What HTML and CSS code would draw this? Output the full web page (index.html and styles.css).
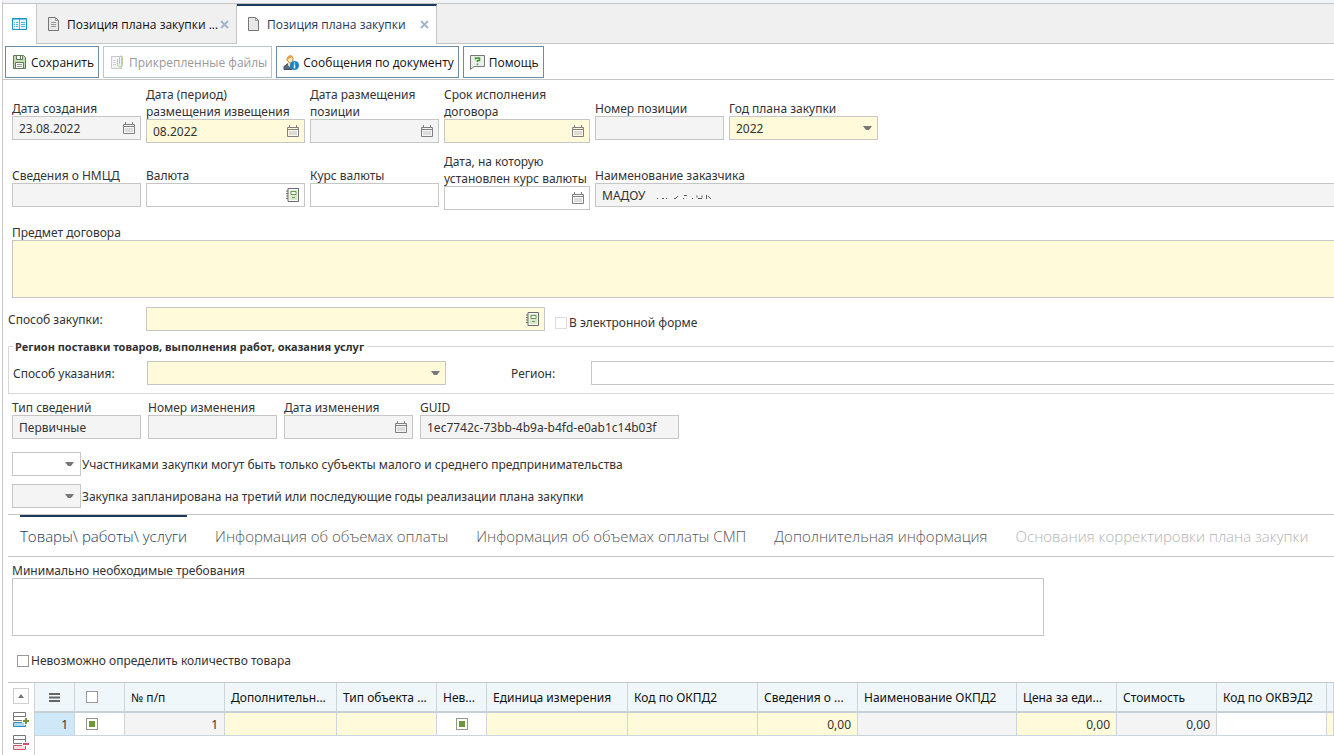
FILE: index.html
```html
<!DOCTYPE html>
<html lang="ru">
<head>
<meta charset="utf-8">
<title>Позиция плана закупки</title>
<link rel="stylesheet" href="styles.css">
</head>
<body>
<svg class="defs" aria-hidden="true">
  <symbol id="cal" viewBox="0 0 12 12"><path d="M.5 2.500h11v9H.5zM.5 4.500h11M2.500 0v3M9.500 0v3" fill="none" stroke="#808080"/><path d="M2 6h8v4H2z" fill="#dcdcdc"/></symbol>
  <symbol id="book" viewBox="0 0 13 14"><path d="M2 .5h10.500v13H2z" fill="#fff" stroke="#6b6b6b"/><path d="M3.500 2h8v10h-8z" fill="#d8e8cc"/><path d="M0 3h2M0 5.500h2M0 8h2M0 10.500h2" stroke="#6b6b6b"/><path d="M5 3.500h5v3H5zM6 9.500h3" fill="#fff" stroke="#6b9a4a"/></symbol>
  <symbol id="arrow" viewBox="0 0 9 5"><path d="M0 0h9L6 4H3z" fill="#777"/></symbol>
  <symbol id="cross" viewBox="0 0 9 9"><path d="M1 1l7 7M8 1L1 8" stroke="#a3b6ca" stroke-width="2"/></symbol>
</svg>
<div class="app">
  <nav class="tabs">
    <button class="tab home" aria-label="Главная"><svg width="15" height="12" viewBox="0 0 15 12"><path d="M.5.5h14v11H.5z" fill="#e4f5fc" stroke="#1591c9"/><path d="M7.500 1v10M9 4.500h4M9 6.500h4M9 8.500h4" stroke="#52b4dc"/><path d="M.5 1h14" stroke="#1591c9"/><path d="M2 4.500h1M4 4.500h2M2 6.500h1M4 6.500h2M2 8.500h1M4 8.500h2" stroke="#52b4dc"/></svg></button>
    <div class="tab"><svg width="11" height="14" viewBox="0 0 11 14"><path d="M.5.5h7l3 3v10H.5z" fill="#e8e8e8" stroke="#777"/><path d="M7.500.5v3h3M3 5.500h5M3 7.500h5M3 9.500h5" fill="none" stroke="#999"/></svg><a href="#">Позиция плана закупки ...</a><button class="close" aria-label="Закрыть"><svg width="9" height="9"><use href="#cross"/></svg></button></div>
    <div class="tab active"><svg width="11" height="14" viewBox="0 0 11 14"><path d="M.5.5h7l3 3v10H.5z" fill="#e8e8e8" stroke="#777"/><path d="M7.500.5v3h3" fill="none" stroke="#999"/></svg><a href="#">Позиция плана закупки</a><button class="close" aria-label="Закрыть"><svg width="9" height="9"><use href="#cross"/></svg></button></div>
  </nav>
  <div class="toolbar">
    <button class="tool"><svg width="15" height="15" viewBox="0 0 15 15"><path d="M1.500.5h10l2 2v11h-12z" fill="#c4dcb2" stroke="#5f7a52"/><path d="M4.500.5h6v4h-6z" fill="#fff" stroke="#5f7a52"/><path d="M8.500 1v3" stroke="#5f7a52"/><path d="M3.500 7.500h8v6h-8z" fill="#fff" stroke="#5f7a52"/><path d="M5 9.500h5M5 11.500h5" stroke="#999"/></svg>Сохранить</button>
    <button class="tool" disabled><svg width="15" height="15" viewBox="0 0 15 15"><path d="M1.500 1.500h10v12h-10z" fill="#f5f5f5" stroke="#c9c9c9"/><path d="M3 5.500h3M3 7.500h3M3 9.500h3" stroke="#d5d5d5"/><path d="M7.500 4v5.500a2.500 2.500 0 0 0 5 0V2.500a1.500 1.500 0 0 0-3 0v7" fill="none" stroke="#b5cc9a"/></svg>Прикрепленные файлы</button>
    <button class="tool"><svg width="16" height="15" viewBox="0 0 16 15"><path d="M1 14.500v-3l4-3 4 3v3z" fill="#5c6b7a" stroke="#3f4d5b"/><path d="M5 7.500h3v3l-1.500 1.500L5 10z" fill="#f7e4bd"/><path d="M4.500 5.500V3l2-2h2l1.500 2v3L8.500 8h-2z" fill="#fbe6ba" stroke="#c08a3c"/><path d="M3.500 6V3L6 .5h3l1 1.500-5 2v2z" fill="#e0a14a"/><circle cx="11.500" cy="10.500" r="4.500" fill="#1583c8"/><path d="M11.500 7.500v1M11.500 9.500v4" stroke="#fff" stroke-width="1.500"/></svg>Сообщения по документу</button>
    <button class="tool"><svg width="15" height="15" viewBox="0 0 15 15"><path d="M.5.5h14v11H4l-3.500 3z" fill="#eceeea" stroke="#777"/><path d="M5.500 4.500V3h4v2.500h-2V7M7.500 8.500V10" fill="none" stroke="#3b9b33" stroke-width="1.500"/></svg>Помощь</button>
  </div>
  <main>
    <div class="row row-top">
      <label class="field single w129">Дата создания<span class="box ro"><input value="23.08.2022" readonly><svg width="12" height="12"><use href="#cal"/></svg></span></label>
      <label class="field w159">Дата (период)<br>размещения извещения<span class="box req"><input value="08.2022"><svg width="12" height="12"><use href="#cal"/></svg></span></label>
      <label class="field w129">Дата размещения<br>позиции<span class="box ro"><input readonly><svg width="12" height="12"><use href="#cal"/></svg></span></label>
      <label class="field w146">Срок исполнения<br>договора<span class="box req"><input><svg width="12" height="12"><use href="#cal"/></svg></span></label>
      <label class="field single w129">Номер позиции<span class="box ro"><input readonly></span></label>
      <label class="field single w149">Год плана закупки<span class="box req"><select><option>2022</option></select><svg width="9" height="5"><use href="#arrow"/></svg></span></label>
    </div>
    <div class="row row-next">
      <label class="field single w129">Сведения о НМЦД<span class="box ro"><input readonly></span></label>
      <label class="field single w159">Валюта<span class="box"><input><svg width="13" height="14"><use href="#book"/></svg></span></label>
      <label class="field single w129">Курс валюты<span class="box"><input></span></label>
      <label class="field w146">Дата, на которую<br>установлен курс валюты<span class="box"><input><svg width="12" height="12"><use href="#cal"/></svg></span></label>
      <label class="field single grow">Наименование заказчика<span class="box ro open"><input class="org" value="МАДОУ" readonly><svg width="58" height="12" viewBox="0 0 58 12"><path d="M1 9.500h1M6 9.500h2M10 9.500h1M18 9.500h2M20 8.500h1M21 7.500h1M27 9.500h1M28 6.500h3M36 9.500h1M41 6.500v2M46 6.500v2M42 9.500h4M50.500 6v4M52 7.500h1M53 8.500h1M54 9.500h1" stroke="#555" fill="none"/></svg></span></label>
    </div>
    <label class="field subject">Предмет договора<textarea class="area req open"></textarea></label>
    <div class="line">
      <label class="cap" for="way">Способ закупки:</label>
      <span class="box req w399"><input id="way"><svg width="13" height="14"><use href="#book"/></svg></span>
      <label class="check electronic"><input type="checkbox" disabled>В электронной форме</label>
    </div>
    <fieldset class="region">
      <legend>Регион поставки товаров, выполнения работ, оказания услуг</legend>
      <div class="region-line">
        <label class="cap-mode" for="mode">Способ указания:</label>
        <span class="box req w299"><select id="mode"><option></option></select><svg width="9" height="5"><use href="#arrow"/></svg></span>
        <label class="cap-region" for="reg">Регион:</label>
        <span class="box open grow"><input id="reg"></span>
      </div>
    </fieldset>
    <div class="row row-info">
      <label class="field w129">Тип сведений<span class="box ro"><input value="Первичные" readonly></span></label>
      <label class="field w129">Номер изменения<span class="box ro"><input readonly></span></label>
      <label class="field w129">Дата изменения<span class="box ro"><input readonly><svg width="12" height="12"><use href="#cal"/></svg></span></label>
      <label class="field w259">GUID<span class="box ro"><input value="1ec7742c-73bb-4b9a-b4fd-e0ab1c14b03f" readonly></span></label>
    </div>
    <label class="flag"><span class="box"><select><option></option></select><svg width="9" height="5"><use href="#arrow"/></svg></span>Участниками закупки могут быть только субъекты малого и среднего предпринимательства</label>
    <label class="flag"><span class="box ro"><select><option></option></select><svg width="9" height="5"><use href="#arrow"/></svg></span>Закупка запланирована на третий или последующие годы реализации плана закупки</label>
    <nav class="sections">
      <a class="current" href="#">Товары\ работы\ услуги</a>
      <a href="#">Информация об объемах оплаты</a>
      <a href="#">Информация об объемах оплаты СМП</a>
      <a href="#">Дополнительная информация</a>
      <a class="off" href="#">Основания корректировки плана закупки</a>
    </nav>
    <label class="field needs">Минимально необходимые требования<textarea class="area"></textarea></label>
    <label class="check unknown"><input type="checkbox">Невозможно определить количество товара</label>
    <div class="grid">
      <div class="side">
        <button class="up" aria-label="Вверх"><svg width="6" height="4" viewBox="0 0 6 4"><path d="M0 4l3-4 3 4z" fill="#777"/></svg></button>
        <button aria-label="Добавить строку"><svg width="16" height="15" viewBox="0 0 16 15"><path d="M.5.5h12v4H.5zM.5 4.500h12v4H.5z" fill="#fff" stroke="#777"/><path d="M12.500 10.500H.5v4h12z" fill="#a9d8ec" stroke="#2a8fc0"/><path d="M13 5v8M9 9h8" stroke="#fff" stroke-width="4"/><path d="M13 6v6M10 9h6" stroke="#6c983a" stroke-width="2"/></svg></button>
        <button aria-label="Удалить строку"><svg width="16" height="15" viewBox="0 0 16 15"><path d="M.5.5h12v4H.5zM.5 4.500h12v4H.5z" fill="#fff" stroke="#777"/><path d="M.5 10.500h12v4H.5z" fill="#fbdde2" stroke="#d0526a"/><path d="M9 9h7" stroke="#fff" stroke-width="4"/><path d="M10 9h6" stroke="#d0526a" stroke-width="2"/></svg></button>
      </div>
      <table>
        <colgroup><col class="c40"><col class="c50"><col class="c100"><col class="c112"><col class="c100"><col class="c50"><col class="c141"><col class="c130"><col class="c100"><col class="c159"><col class="c100"><col class="c100"><col class="c110"><col></colgroup>
        <thead><tr><th class="mid"><svg width="11" height="9" viewBox="0 0 11 9"><path d="M0 1h11M0 4.500h11M0 8h11" stroke="#666" stroke-width="2"/></svg></th><th class="pick"><input type="checkbox" aria-label="Выбрать все"></th><th>№ п/п</th><th>Дополнительн...</th><th>Тип объекта ...</th><th>Нев...</th><th>Единица измерения</th><th>Код по ОКПД2</th><th>Сведения о ...</th><th>Наименование ОКПД2</th><th>Цена за еди...</th><th>Стоимость</th><th>Код по ОКВЭД2</th><th></th></tr></thead>
        <tbody><tr><td class="num sel">1</td><td class="pick"><input type="checkbox" checked aria-label="Выбрать строку"></td><td class="num ro">1</td><td class="req"></td><td class="req"></td><td class="mid"><input type="checkbox" checked aria-label="Невозможно определить"></td><td class="req"></td><td class="req"></td><td class="num req">0,00</td><td class="ro"></td><td class="num req">0,00</td><td class="num ro">0,00</td><td></td><td class="req"></td></tr></tbody>
      </table>
    </div>
  </main>
</div>
</body>
</html>
```
FILE: styles.css
```css
* { box-sizing: border-box; }
body { margin: 0; background: #fff; color: #333; font: 12px/17px "Noto Sans", sans-serif; overflow: hidden; }
button, input, select, textarea { font: inherit; color: inherit; margin: 0; padding: 0; border: 0; background: none; border-radius: 0; outline: 0; }
a { color: inherit; text-decoration: none; }
svg { flex: none; display: block; }
.defs { position: absolute; width: 0; height: 0; }
.app { border-top: 3px solid #f1f3f6; margin-left: 2px; border-left: 1px solid #c6c6c6; min-height: 100vh; }

.tabs, .toolbar { font-family: "Open Sans", sans-serif; }
.tabs { display: flex; height: 41px; background: #f0f0f0; border-top: 1px solid #c6c6c6; border-bottom: 1px solid #c6c6c6; }
.tab { display: flex; align-items: center; width: 200px; height: 40px; padding: 0 7px 0 11px; border-right: 1px solid #c6c6c6; color: #111; }
.tab a { flex: 1; margin-left: 8px; white-space: nowrap; }
.tab.home { width: 34px; padding: 0; justify-content: center; background: #fff; }
.tab.active { background: #fff; border-top: 2px solid #1c3a5a; padding-bottom: 2px; color: #1c3a5a; }
.close { height: 14px; }

.toolbar { display: flex; gap: 4px; padding: 2px; height: 36px; border-bottom: 1px solid #c6c6c6; }
.tool { display: flex; align-items: center; gap: 4px; height: 32px; padding: 0 4px 0 6px; border: 1px solid #6f8aa3; background: #fff; color: #111; white-space: nowrap; }
.tool:disabled { border-color: #b9c6d2; color: #999; }

.row { display: flex; align-items: flex-end; gap: 5px; margin-left: 9px; height: 57px; }
.row-top { margin-top: 6px; }
.row-next { margin-top: 10px; }
.row-info { gap: 7px; margin-top: 5px; height: 40px; }
.field { display: block; white-space: nowrap; }
.field .box, .field .area { margin-top: -1px; }
.single { margin-bottom: 3px; }
.grow { flex: 1; }
.w129 { width: 129px; }
.w146 { width: 146px; }
.w149 { width: 149px; }
.w159 { width: 159px; }
.w259 { width: 259px; }
.w299 { width: 299px; }
.w399 { width: 399px; }
.box { display: flex; align-items: center; height: 24px; padding: 0 5px 0 6px; border: 1px solid #c6c6c6; background: #fff; }
.box input, .box select { flex: 1; min-width: 0; width: 0; height: 22px; appearance: none; }
.box .org { flex: none; width: 54px; }
.box.ro, td.ro { background: #f4f4f4; }
.box.req, .area.req, td.req { background: #fffada; }
.box.open, .area.open { border-right: 0; }
.area { display: block; width: 100%; height: 58px; border: 1px solid #c6c6c6; resize: none; }
.subject { margin: 14px 0 0 9px; }

.line { display: flex; align-items: center; margin: 9px 0 0 5px; }
.cap { width: 138px; }
.check { display: flex; align-items: center; gap: 2px; }
.check input, th input, td input { appearance: none; width: 12px; height: 12px; border: 1px solid #999; background: #fff; display: block; }
.electronic { margin: 7px 0 0 10px; }
.check input:disabled { border-color: #ddd; }
td input:checked { border-color: #8d9c82; background: #6c983a content-box; padding: 2px; }

.region { margin: 7px 0 0 5px; padding: 0 0 8px 4px; border: 1px solid #d8d8d8; border-right: 0; min-width: 0; }
.region legend { padding: 0 3px 0 2px; font-weight: bold; font-size: 11px; }
.region-line { display: flex; align-items: center; margin-top: 6px; }
.cap-mode { width: 134px; }
.cap-region { width: 80px; margin-left: 65px; }

.flag { display: flex; align-items: center; gap: 1px; margin: 13px 0 0 9px; }
.flag + .flag { margin-top: 8px; }
.flag .box { width: 69px; padding-right: 6px; }

.sections { display: flex; gap: 28px; margin: 6px 0 0 5px; padding-left: 12px; height: 43px; border-top: 1px solid #c6c6c6; border-bottom: 1px solid #c6c6c6; font: 300 15px/38px "Open Sans", sans-serif; color: #555; white-space: nowrap; }
.sections a { border-top: 2px solid transparent; }
.sections .current { color: #1c3a5a; border-color: #1c3a5a; }
.sections .off { color: #b4b4b4; }
.needs { width: 1032px; margin: 5px 0 0 9px; }
.unknown { margin: 16px 0 0 14px; }

.grid { display: flex; margin: 13px 0 0 5px; border-top: 1px solid #c6c6c6; }
.side { display: flex; flex-direction: column; align-items: center; gap: 8px; width: 27px; min-height: 73px; padding-top: 5px; border-right: 1px solid #cbd5dc; }
.up { display: flex; align-items: center; justify-content: center; width: 16px; height: 16px; border: 1px solid #d0d0d0; }
table { flex: 1; width: 0; align-self: flex-start; table-layout: fixed; border-collapse: separate; border-spacing: 0; }
th, td { border-right: 1px solid #cbd5dc; border-bottom: 1px solid #cbd5dc; padding: 0 6px; font-weight: normal; text-align: left; white-space: nowrap; overflow: hidden; }
th { height: 30px; background: #eff7fb; color: #111; border-bottom: 2px solid #c6d0d6; }
td { height: 23px; }
.num { text-align: right; }
.sel { background: #cfe8f7; }
.mid svg, .mid input { margin: 0 auto; }
.pick { padding-left: 11px; }
.c40 { width: 40px; }
.c50 { width: 50px; }
.c100 { width: 100px; }
.c110 { width: 110px; }
.c112 { width: 112px; }
.c130 { width: 130px; }
.c141 { width: 141px; }
.c159 { width: 159px; }
```
